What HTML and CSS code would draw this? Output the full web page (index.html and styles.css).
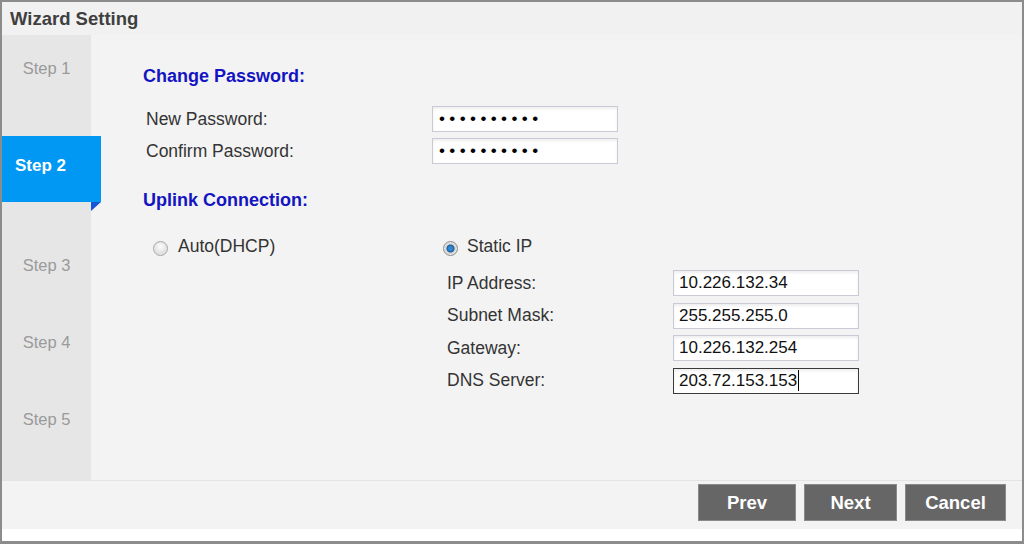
FILE: index.html
```html
<!DOCTYPE html>
<html lang="en">
<head>
  <meta charset="UTF-8">
  <title>Wizard Setting</title>
  <link rel="stylesheet" href="styles.css">
</head>
<body>

<div class="wizard">
  <div class="wizard-title">Wizard Setting</div>

  <div class="wizard-main">
    <div class="steps">
      <div class="step step-1">Step 1</div>
      <div class="step step-active">Step 2</div>
      <div class="step step-3">Step 3</div>
      <div class="step">Step 4</div>
      <div class="step">Step 5</div>
    </div>

    <div class="content">
      <div class="section-title">Change Password:</div>
      <div class="form-row first">
        <div class="label">New Password:</div>
        <div class="field pass">••••••••••</div>
      </div>
      <div class="form-row">
        <div class="label">Confirm Password:</div>
        <div class="field pass">••••••••••</div>
      </div>

      <div class="section-title uplink">Uplink Connection:</div>
      <div class="uplink-cols">
        <div class="col-left">
          <label class="option"><span class="radio"></span>Auto(DHCP)</label>
        </div>
        <div class="col-right">
          <label class="option"><span class="radio checked"></span>Static IP</label>
          <div class="ip-grid">
            <div class="ip-label">IP Address:</div>
            <div class="field">10.226.132.34</div>
            <div class="ip-label">Subnet Mask:</div>
            <div class="field">255.255.255.0</div>
            <div class="ip-label">Gateway:</div>
            <div class="field">10.226.132.254</div>
            <div class="ip-label">DNS Server:</div>
            <div class="field focused">203.72.153.153<span class="caret"></span></div>
          </div>
        </div>
      </div>
    </div>
  </div>

  <div class="wizard-footer">
    <button class="btn btn-prev">Prev</button>
    <button class="btn btn-next">Next</button>
    <button class="btn btn-cancel">Cancel</button>
  </div>
  <div class="wizard-bottom"></div>
</div>

</body>
</html>
```

FILE: styles.css
```css
* { box-sizing: border-box; }

body {
  margin: 0;
  padding: 0;
  background: #fff;
  font-family: "Liberation Sans", Arial, sans-serif;
}

.wizard {
  width: 1024px;
  height: 544px;
  border: 2px solid #8c8c8c;
  border-bottom-width: 3px;
  display: flex;
  flex-direction: column;
  background: #fff;
}

.wizard-title {
  height: 33px;
  line-height: 33px;
  padding-left: 8px;
  background: #f1f1f1;
  color: #3f3f3f;
  font-weight: bold;
  font-size: 18.5px;
}

.wizard-main {
  display: flex;
  height: 446px;
  background: #f3f3f3;
  border-bottom: 1px solid #e4e4e4;
}

/* left step list */
.steps {
  width: 89px;
  flex-shrink: 0;
  background: #e6e6e6;
  display: flex;
  flex-direction: column;
}

.step {
  height: 77px;
  display: flex;
  align-items: center;
  justify-content: center;
  color: #9a9a9a;
  font-size: 16.5px;
}

.step-1 { height: 66px; }
.step-3 { margin-top: 25px; }

.step-active {
  position: relative;
  width: 99px;
  height: 66px;
  margin-top: 35px;
  justify-content: flex-start;
  padding: 0 0 6px 13px;
  background: #0098f2;
  color: #fff;
  font-weight: bold;
  font-size: 17px;
  z-index: 1;
}

.step-active::after {
  content: "";
  position: absolute;
  right: 0;
  bottom: -9px;
  border-top: 9px solid #1456d8;
  border-left: 10px solid transparent;
  transform: scaleX(-1);
}

/* form */
.content {
  flex: 1;
  padding: 30px 0 0 52px;
  color: #333;
  font-size: 17.5px;
}

.section-title {
  line-height: 22px;
  color: #1414c2;
  font-weight: bold;
  font-size: 18px;
}

.section-title.uplink { margin-top: 25px; }

.form-row {
  display: flex;
  align-items: center;
  margin-top: 6px;
}

.form-row.first { margin-top: 19px; }

.label {
  width: 289px;
  padding-left: 3px;
}

.field {
  width: 186px;
  height: 26px;
  line-height: 24px;
  padding-left: 5px;
  border: 1px solid #c9c9d8;
  background: #fff;
  box-shadow: inset 0 2px 3px rgba(0,0,0,0.07);
  color: #111;
  font-size: 17px;
  white-space: nowrap;
}

.field.pass {
  padding-left: 6px;
  font-size: 17px;
  letter-spacing: 4.4px;
  color: #000;
}

.field.focused {
  border-color: #3a3a3a;
}

.caret {
  display: inline-block;
  width: 1px;
  height: 21px;
  margin-left: 1px;
  background: #000;
  vertical-align: -5px;
}

.uplink-cols {
  display: flex;
  margin-top: 24px;
}

.col-left {
  width: 300px;
  flex-shrink: 0;
  padding-left: 10px;
}

.option {
  display: flex;
  align-items: center;
  height: 22px;
}

.radio {
  flex-shrink: 0;
  width: 15px;
  height: 15px;
  margin: 4px 10px 0 0;
  border-radius: 50%;
  border: 1px solid #a6a6a6;
  background: radial-gradient(circle at 50% 35%, #fdfdfd, #cfcfcf);
  box-shadow: inset 0 0 0 1px #e8e8e8;
}

.radio.checked {
  border-color: #8e8e8e;
  background: radial-gradient(circle, #3288d0 0 2px, #1b5a96 3.5px, #d8d8d8 4.5px, #c6c6c6);
}

.col-right .radio { margin-right: 9px; }

.ip-grid {
  display: grid;
  grid-template-columns: 230px 186px;
  row-gap: 6.5px;
  align-items: center;
  margin-top: 13px;
}

.ip-label {
  padding-left: 4px;
}

/* footer */
.wizard-footer {
  height: 48px;
  display: flex;
  justify-content: flex-end;
  align-items: flex-start;
  gap: 8px;
  padding: 3px 16px 0 0;
  background: #f3f3f3;
}

.btn {
  height: 37px;
  border: 1px solid #8a8a8a;
  background: #666;
  color: #fff;
  font-family: "Liberation Sans", Arial, sans-serif;
  font-weight: bold;
  font-size: 18.5px;
  cursor: pointer;
}

.btn-prev { width: 98px; }
.btn-next { width: 93px; }
.btn-cancel { width: 101px; }

.wizard-bottom {
  flex: 1;
  background: #fff;
}
```
